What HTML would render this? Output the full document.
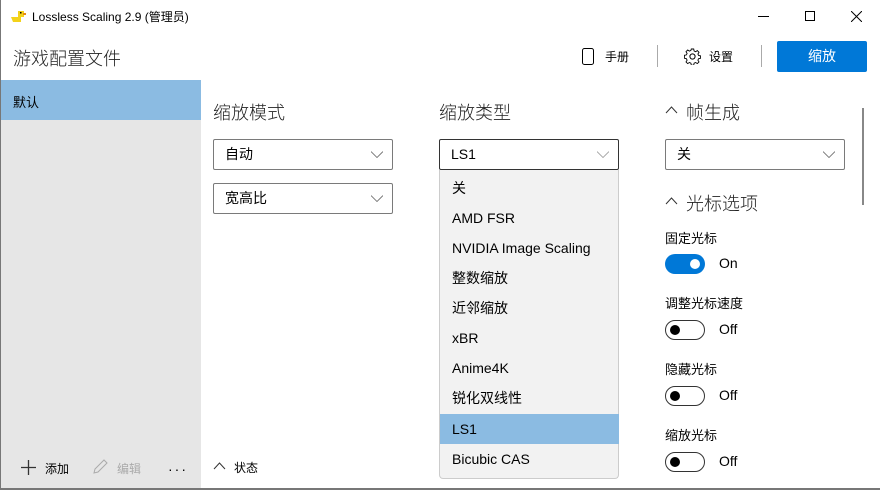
<!DOCTYPE html>
<html><head><meta charset="utf-8"><style>
*{margin:0;padding:0;box-sizing:border-box}
body{width:880px;height:490px;overflow:hidden;background:#fff;font-family:"Liberation Sans","Noto Sans CJK SC",sans-serif;color:#000;position:relative}
.a{position:absolute;white-space:nowrap}
.dd{position:absolute;height:31px;border:1px solid #7a7a7a;border-radius:2px;background:#fff;font-size:14px;padding-left:11px;line-height:29px}
.dd svg{position:absolute;right:9px;top:11px}
.it{position:absolute;left:0;width:180px;height:30px;line-height:30px;padding-left:12px;font-size:14px}
.tg{position:absolute;width:40px;height:20px;border-radius:10px}
.on{background:#0078d7}
.on::after{content:"";position:absolute;right:5px;top:5px;width:10px;height:10px;border-radius:5px;background:#fff}
.off{border:1.5px solid #333;background:#fff}
.off::after{content:"";position:absolute;left:4px;top:3.5px;width:10px;height:10px;border-radius:5px;background:#000}
.h{font-weight:300;color:#222}
</style></head><body>
<div class="a" style="left:0;top:0;width:1px;height:490px;background:#777"></div>
<div class="a" style="left:0;top:488px;width:880px;height:2px;background:#777"></div>
<svg class="a" style="left:10px;top:9px" width="16" height="14" viewBox="0 0 16 14"><path d="M1 8h10v5H3z" fill="#f3d21a"/><rect x="8" y="2" width="6" height="6" fill="#f3d21a"/><rect x="13" y="4" width="3" height="2" fill="#e98a12"/><rect x="10" y="3" width="1.5" height="1.5" fill="#000"/></svg>
<div class="a" style="left:32px;top:8px;font-size:12px">Lossless Scaling 2.9 (管理员)</div>
<div class="a" style="left:758px;top:16px;width:11px;height:1px;background:#000"></div>
<div class="a" style="left:805px;top:11px;width:10px;height:10px;border:1px solid #000"></div>
<svg class="a" style="left:851px;top:11px" width="11" height="11"><path d="M0 0L11 11M11 0L0 11" stroke="#000" stroke-width="1"/></svg>
<div class="a h" style="left:13px;top:45px;font-size:18px">游戏配置文件</div>
<svg class="a" style="left:582px;top:48px" width="12" height="17"><rect x="0.5" y="0.5" width="11" height="16" rx="2" fill="none" stroke="#000"/></svg>
<div class="a" style="left:605px;top:48px;font-size:12px">手册</div>
<div class="a" style="left:657px;top:45px;width:1px;height:22px;background:#aaa"></div>
<svg class="a" style="left:684px;top:48px" width="17" height="17" viewBox="0 0 17 17"><circle cx="8.5" cy="8.5" r="2.6" fill="none" stroke="#000"/><path d="M7.3 1h2.4l.4 2 1.5.7 1.7-1.1 1.7 1.7-1.1 1.7.7 1.5 2 .4v2.4l-2 .4-.7 1.5 1.1 1.7-1.7 1.7-1.7-1.1-1.5.7-.4 2H7.3l-.4-2-1.5-.7-1.7 1.1-1.7-1.7 1.1-1.7-.7-1.5-2-.4V7.3l2-.4.7-1.5-1.1-1.7 1.7-1.7 1.7 1.1 1.5-.7z" fill="none" stroke="#000" stroke-width=".9"/></svg>
<div class="a" style="left:709px;top:48px;font-size:12px">设置</div>
<div class="a" style="left:761px;top:45px;width:1px;height:22px;background:#aaa"></div>
<div class="a" style="left:777px;top:41px;width:90px;height:31px;background:#0078d7;border-radius:2px;color:#fff;font-size:14px;text-align:center;line-height:31px">缩放</div>
<div class="a" style="left:1px;top:80px;width:200px;height:408px;background:#e6e6e6"></div>
<div class="a" style="left:1px;top:80px;width:200px;height:40px;background:#8bbbe2"></div>
<div class="a" style="left:13px;top:92px;font-size:13px">默认</div>
<svg class="a" style="left:21px;top:460px" width="15" height="15"><path d="M7.5 0v15M0 7.5h15" stroke="#333" stroke-width="1.3"/></svg>
<div class="a" style="left:45px;top:460px;font-size:12px">添加</div>
<svg class="a" style="left:92px;top:459px" width="16" height="16"><path d="M2 14l1-4 9-9 3 3-9 9z" fill="none" stroke="#aaa"/></svg>
<div class="a" style="left:117px;top:460px;font-size:12px;color:#aaa">编辑</div>
<div class="a" style="left:168px;top:461px;font-size:14px;letter-spacing:2px">···</div>
<div class="a h" style="left:213px;top:99px;font-size:18px">缩放模式</div>
<div class="dd" style="left:213px;top:139px;width:180px">自动<svg width="12" height="7"><path d="M0 .5l6 6 6-6" fill="none" stroke="#666" stroke-width=".8"/></svg></div>
<div class="dd" style="left:213px;top:183px;width:180px">宽高比<svg width="12" height="7"><path d="M0 .5l6 6 6-6" fill="none" stroke="#666" stroke-width=".8"/></svg></div>
<div class="a h" style="left:439px;top:99px;font-size:18px">缩放类型</div>
<div class="dd" style="left:439px;top:139px;width:180px;border-color:#333">LS1<svg width="12" height="7"><path d="M0 .5l6 6 6-6" fill="none" stroke="#999" stroke-width=".8"/></svg></div>
<div class="a" style="left:439px;top:170px;width:180px;height:309px;background:#f2f2f2;border:1px solid #ccc;border-top:none;border-radius:0 0 4px 4px">
<div class="it" style="top:3px">关</div>
<div class="it" style="top:33px">AMD FSR</div>
<div class="it" style="top:63px">NVIDIA Image Scaling</div>
<div class="it" style="top:93px">整数缩放</div>
<div class="it" style="top:123px">近邻缩放</div>
<div class="it" style="top:153px">xBR</div>
<div class="it" style="top:183px">Anime4K</div>
<div class="it" style="top:213px">锐化双线性</div>
<div class="it" style="top:244px;background:#8bbbe2;width:179px">LS1</div>
<div class="it" style="top:274px">Bicubic CAS</div>
</div>
<svg class="a" style="left:213px;top:462px" width="13" height="8"><path d="M1 7l5.5-6 5.5 6" fill="none" stroke="#333"/></svg>
<div class="a" style="left:234px;top:459px;font-size:12px">状态</div>
<svg class="a" style="left:665px;top:106px" width="13" height="8"><path d="M1 7l5.5-6 5.5 6" fill="none" stroke="#333"/></svg>
<div class="a h" style="left:686px;top:99px;font-size:18px">帧生成</div>
<div class="dd" style="left:665px;top:139px;width:180px">关<svg width="12" height="7"><path d="M0 .5l6 6 6-6" fill="none" stroke="#666" stroke-width=".8"/></svg></div>
<svg class="a" style="left:665px;top:197px" width="13" height="8"><path d="M1 7l5.5-6 5.5 6" fill="none" stroke="#333"/></svg>
<div class="a h" style="left:686px;top:190px;font-size:18px">光标选项</div>
<div class="a" style="left:665px;top:228px;font-size:13px">固定光标</div>
<div class="tg on" style="left:665px;top:254px"></div><div class="a" style="left:719px;top:255px;font-size:14px">On</div>
<div class="a" style="left:665px;top:293px;font-size:13px">调整光标速度</div>
<div class="tg off" style="left:665px;top:320px"></div><div class="a" style="left:719px;top:321px;font-size:14px">Off</div>
<div class="a" style="left:665px;top:359px;font-size:13px">隐藏光标</div>
<div class="tg off" style="left:665px;top:386px"></div><div class="a" style="left:719px;top:387px;font-size:14px">Off</div>
<div class="a" style="left:665px;top:425px;font-size:13px">缩放光标</div>
<div class="tg off" style="left:665px;top:452px"></div><div class="a" style="left:719px;top:453px;font-size:14px">Off</div>
<div class="a" style="left:862px;top:108px;width:2px;height:97px;background:#888"></div>
</body></html>
